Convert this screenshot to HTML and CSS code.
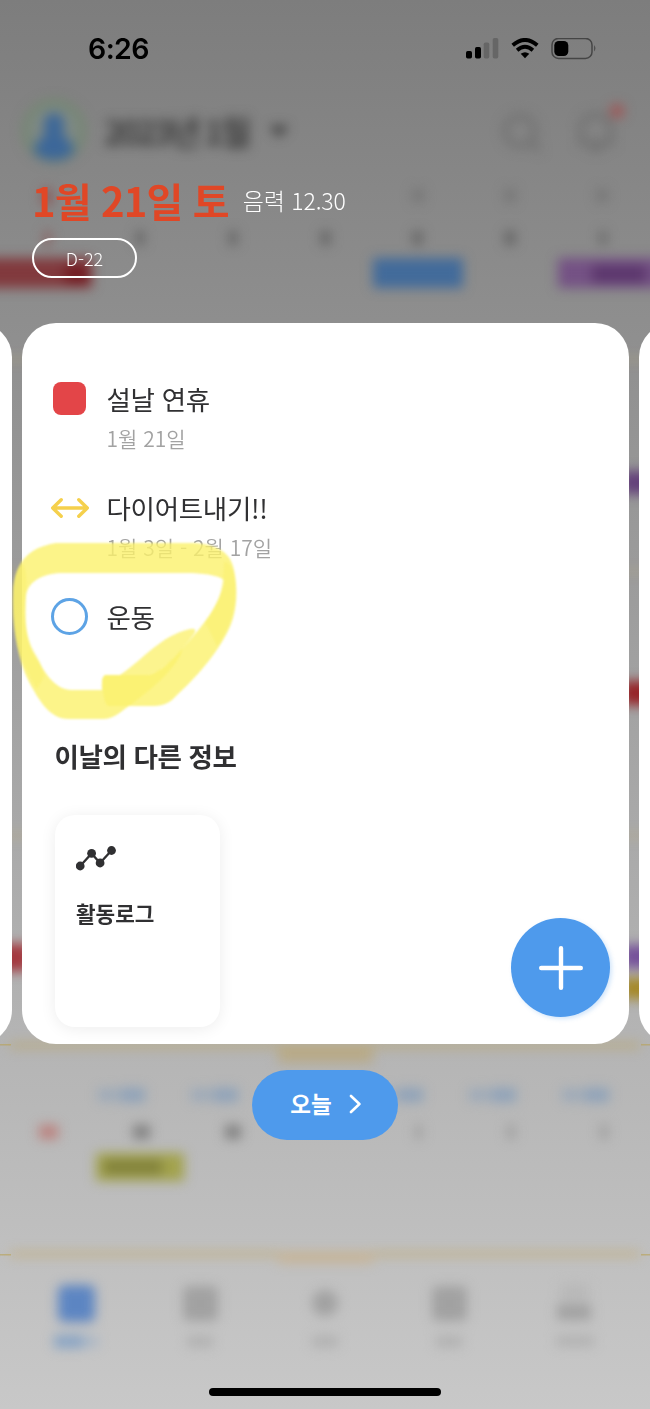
FILE: index.html
```html
<!DOCTYPE html>
<html lang="ko">
<head>
<meta charset="utf-8">
<title>1월 21일</title>
<link rel="stylesheet" href="styles.css">
</head>
<body>
<div class="screen">
  <svg class="backdrop" viewBox="0 0 650 1409" aria-hidden="true">
    <defs>
      <filter id="soft" x="-60" y="-60" width="770" height="1530" filterUnits="userSpaceOnUse" color-interpolation-filters="sRGB"><feGaussianBlur stdDeviation="6"/></filter>
    </defs>
    <g filter="url(#soft)">
      <circle cx="54" cy="131" r="29" fill="#7f8983" stroke="#6f866c" stroke-width="5"/>
      <path d="M34 152c0-10 8-14 12-18-5-12 0-21 8-21s13 9 8 21c4 4 12 8 12 18-9 11-31 11-40 0z" fill="#3c6799"/>
      <text class="backdrop-month" x="104" y="145" textLength="147">2023년 1월</text>
      <path d="M269 126h20l-10 11z" fill="#3a3a3a"/>
      <g fill="none" stroke="#6f6f6f" stroke-width="5">
        <circle cx="520" cy="131" r="15"/><path d="M531 142l9 9"/>
        <path d="M581 143v-12q0-16 15-16t15 16v12zM590 149h12"/>
      </g>
      <circle cx="617" cy="111" r="7" fill="#a05454"/>
      <g fill="#747474">
        <rect x="413" y="189" width="10" height="13"/><rect x="505" y="189" width="10" height="13"/><rect x="597" y="189" width="10" height="13"/>
      </g>
      <rect x="42" y="189" width="10" height="16" fill="#8b5555"/>
      <g fill="#626262">
        <rect x="136" y="231" width="8" height="14"/><rect x="229" y="231" width="8" height="14"/><rect x="321" y="231" width="9" height="14"/><rect x="413" y="231" width="9" height="14"/><rect x="505" y="231" width="10" height="14"/><rect x="600" y="231" width="6" height="14"/>
      </g>
      <rect x="44" y="231" width="7" height="15" fill="#8a6060"/>
      <rect x="-20" y="258" width="112" height="30" fill="#81393d"/><rect x="65" y="264" width="24" height="20" fill="#731d23"/>
      <rect x="373" y="258" width="90" height="30" fill="#426b9a"/>
      <rect x="558" y="258" width="122" height="30" fill="#745184"/><rect x="592" y="265" width="54" height="18" fill="#5c376d"/>
      <rect x="622" y="471" width="40" height="23" fill="#63407a"/>
      <rect x="622" y="681" width="40" height="24" fill="#962327"/>
      <rect x="622" y="945" width="40" height="23" fill="#75509a"/>
      <rect x="622" y="978" width="40" height="21" fill="#a58826"/>
      <rect x="-20" y="944" width="50" height="27" fill="#a3383f"/>
      <g fill="#b9a878">
        <rect x="-20" y="358" width="690" height="3" opacity=".6"/><rect x="-20" y="570" width="690" height="3" opacity=".6"/><rect x="-20" y="834" width="690" height="3" opacity=".8"/>
        <rect x="10" y="1043" width="630" height="5"/><rect x="278" y="1046" width="95" height="17" fill="#b8aa88"/>
        <rect x="10" y="1252" width="630" height="4" fill="#c2ab75"/><rect x="278" y="1253" width="95" height="10" fill="#c7b497"/>
      </g>
      <g fill="#8ea2b9">
        <rect x="98" y="1089" width="18" height="12" opacity=".7"/><rect x="119" y="1088" width="26" height="14"/>
        <rect x="191" y="1089" width="18" height="12" opacity=".7"/><rect x="212" y="1088" width="26" height="14"/>
        <rect x="376" y="1089" width="18" height="12" opacity=".7"/><rect x="397" y="1088" width="26" height="14"/>
        <rect x="469" y="1089" width="18" height="12" opacity=".7"/><rect x="490" y="1088" width="26" height="14"/>
        <rect x="562" y="1089" width="18" height="12" opacity=".7"/><rect x="583" y="1088" width="26" height="14"/>
      </g>
      <rect x="39" y="1125" width="19" height="14" fill="#bb817d"/>
      <g fill="#808080"><rect x="133" y="1125" width="17" height="14"/><rect x="225" y="1125" width="16" height="14"/></g>
      <g fill="#9e9e9e"><rect x="415" y="1125" width="7" height="14"/><rect x="507" y="1125" width="8" height="14"/><rect x="600" y="1125" width="8" height="14"/></g>
      <rect x="96" y="1153" width="88" height="28" fill="#a2a24c"/><rect x="104" y="1160" width="58" height="14" fill="#80803a"/>
      <rect x="58" y="1285" width="37" height="37" rx="6" fill="#5c85c2"/>
      <rect x="54" y="1335" width="29" height="13" fill="#87a3c4"/><rect x="83" y="1336" width="15" height="11" fill="#a9b6c6"/>
      <g fill="#a1a1a1">
        <rect x="183" y="1286" width="35" height="35" rx="5"/><circle cx="325" cy="1303" r="13"/>
        <rect x="432" y="1286" width="35" height="35" rx="5"/><rect x="557" y="1304" width="34" height="16"/>
      </g>
      <rect x="560" y="1284" width="29" height="16" fill="#b8b8b8"/>
      <g fill="#b0b0b0"><rect x="187" y="1336" width="26" height="11"/><rect x="312" y="1336" width="26" height="11"/><rect x="436" y="1336" width="26" height="11"/><rect x="556" y="1336" width="38" height="10"/></g>
    </g>
    <g fill="#baa254" opacity=".6"><rect y="1044" width="11" height="1.5"/><rect x="641" y="1044" width="9" height="1.5"/><rect y="1254" width="11" height="1.5"/><rect x="641" y="1254" width="9" height="1.5"/></g>
  </svg>

  <header class="status">
    <span class="clock">6:26</span>
    <span class="indicators">
      <svg width="33" height="22" viewBox="0 0 33 22"><rect y="13" width="6" height="7.5" rx="1.7"/><rect x="9" y="9" width="6" height="11.5" rx="1.7"/><g fill="#666"><rect x="17.7" y="4.5" width="5.6" height="16" rx="1.7"/><rect x="26.7" width="5.6" height="20.5" rx="1.7"/></g></svg>
      <svg width="28" height="22" viewBox="0 0 28 22"><g fill="none" stroke="#000" stroke-width="3.8"><path d="M1.7 7.3Q14-3.5 26.3 7.3"/><path d="M6.1 12.3q7.9-6.9 15.8 0"/></g><path d="M9.7 15.8q4.3-3.2 8.6 0L14 20.3z"/></svg>
      <svg width="46" height="22" viewBox="0 0 46 22"><rect x="1" y=".4" width="40" height="20" rx="6.5" fill="none" stroke="#454545" stroke-width="1.5"/><rect x="3.3" y="3" width="14" height="15" rx="4.5"/><path d="M43.2 7q2.4 3.3 0 6.6z" fill="#454545"/></svg>
    </span>
  </header>

  <section class="day">
    <div class="day-row"><h1 class="day-title">1월 21일 토</h1><span class="lunar">음력 12.30</span></div>
    <span class="dday">D-22</span>
  </section>

  <main class="carousel">
    <div class="card"></div>
    <article class="card card-main">
      <ul class="events">
        <li class="event"><span class="mark"><i class="square"></i></span><div><p class="name">설날 연휴</p><p class="when">1월 21일</p></div></li>
        <li class="event"><span class="mark"><svg width="40" height="24" viewBox="0 0 40 24"><path d="M2.7 12h34.6M11.2 3.7L2.7 12l8.5 8.3M28.8 3.7l8.5 8.3-8.5 8.3" fill="none" stroke="#f5d04c" stroke-width="3.4" stroke-linecap="round" stroke-linejoin="round"/></svg></span><div><p class="name">다이어트내기!!</p><p class="when">1월 3일 - 2월 17일</p></div></li>
        <li class="event"><span class="mark"><i class="ring"></i></span><div><p class="name">운동</p></div></li>
      </ul>
      <h2 class="section-title">이날의 다른 정보</h2>
      <div class="tile">
        <svg width="42" height="28" viewBox="0 0 42 28" fill="#303032"><path d="M4.2 21L15.6 8.5l8.4 9.5L35.5 5.5" fill="none" stroke="#303032" stroke-width="2.3"/><circle cx="4.2" cy="21" r="4.4"/><circle cx="15.6" cy="8.3" r="4.4"/><circle cx="24.1" cy="18" r="4.4"/><circle cx="35.5" cy="5.5" r="4.4"/></svg>
        <p class="tile-name">활동로그</p>
      </div>
      <button class="add" aria-label="추가"><svg width="46" height="46" viewBox="0 0 46 46"><path d="M23 3.2v39.6M3.2 23h39.6" stroke="#fff" stroke-width="4.4" stroke-linecap="round"/></svg></button>
    </article>
    <div class="card"></div>
  </main>

  <button class="today"><span>오늘</span><svg width="12" height="20" viewBox="0 0 12 20"><path d="M2 2l8.4 8L2 18" fill="none" stroke="#fff" stroke-width="2.6" stroke-linecap="round" stroke-linejoin="round"/></svg></button>
  <div class="home-bar"></div>

  <svg class="highlighter" viewBox="0 0 240 190" aria-hidden="true">
    <g fill="#fbf16b">
      <path fill-rule="evenodd" opacity=".8" d="M13 54C14 24 26 8 56 3H195C220 5 231 14 234 30C239 53 236 77 227 93C213 120 190 143 175 157C168 165 160 166 151 166H129C119 173 113 179 103 179H69C49 179 39 160 29 142C17 118 12 88 13 54ZM26 57C27 42 42 34 60 33H192C210 34 218 36 224 40C223 53 214 71 200 88C180 112 165 130 148 135H105Q101 137 102 150H72C53 150 43 129 33 112C25 97 25 76 26 57Z"/>
      <path opacity=".76" d="M120 135C145 118 160 96 190 89Q198 88 194 94C180 113 165 130 148 135Z"/>
      <path opacity=".7" d="M105 135H148C160 133 170 123 183 108Q178 130 129 166H108Q103 163 102 139Z"/>
      <path opacity=".5" d="M13 54C13 37 18 26 23 24Q29 36 25 58C23 85 29 104 36 115Q43 126 44 137L37 149C18 119 12 88 13 54ZM224 22Q232 22 235 38C238 65 230 88 217 106L205 82C219 62 223 52 224 22Z"/>
    </g>
  </svg>
</div>
</body>
</html>
```
FILE: styles.css
```css
* { box-sizing: border-box; margin: 0; padding: 0; }

body {
  font-family: "Noto Sans CJK KR", "Noto Sans", sans-serif;
  color: #303032;
}

button { border: 0; font: inherit; }
svg { display: block; }

.screen {
  position: relative;
  display: flex;
  flex-direction: column;
  width: 650px;
  height: 1409px;
  overflow: hidden;
  background: linear-gradient(#7d7d7d, #c8c8c8);
}

.backdrop { position: absolute; inset: 0; width: 650px; height: 1409px; }
.backdrop-month { font-size: 33px; font-weight: 700; fill: #3c3c3c; }

.status, .day, .carousel, .today, .home-bar { position: relative; flex: none; }

.status {
  display: flex;
  justify-content: space-between;
  align-items: center;
  height: 97px;
  padding: 0 53px 0 88px;
  color: #000;
}
.clock { font: 600 28.5px/40px Inter, sans-serif; letter-spacing: -.6px; }
.indicators { display: flex; gap: 12px; }

.day { height: 225.5px; padding: 73px 32px 0; }
.day-row { display: flex; gap: 14px; align-items: center; height: 60px; white-space: nowrap; }
.day-title { font-size: 40px; line-height: 60px; font-weight: 700; letter-spacing: -.85px; color: #e04726; }
.lunar { font-size: 23px; line-height: 60px; font-weight: 300; letter-spacing: -.1px; color: #fff; }
.dday {
  display: flex;
  align-items: center;
  justify-content: center;
  width: 105px;
  height: 40px;
  margin-top: 8px;
  border: 2px solid #fff;
  border-radius: 20px;
  font-size: 18px;
  line-height: 36px;
  font-weight: 300;
  color: #fff;
}

.carousel { display: flex; justify-content: center; gap: 10px; height: 721px; }
.card { flex: none; width: 607px; border-radius: 34px; background: #fff; }
.card-main { position: relative; padding: 56px 0 0 28px; }

.events { list-style: none; height: 354px; }
.event { display: flex; gap: 17px; height: 109px; }
.mark { display: flex; align-items: center; justify-content: center; width: 40px; height: 40px; }
.square { width: 33px; height: 33px; border-radius: 8px; background: #e34548; }
.ring { width: 37px; height: 37px; border: 3.5px solid #5da3e5; border-radius: 50%; }
.name { font-size: 26.5px; line-height: 40px; letter-spacing: -.3px; }
.when { font-size: 21px; line-height: 38px; font-weight: 350; color: #a2a2a2; }

.section-title { margin: 1px 0 0 5px; font-size: 26.5px; line-height: 44px; font-weight: 700; letter-spacing: -.4px; }
.tile {
  width: 165.5px;
  height: 212px;
  margin: 37px 0 0 5px;
  padding: 30px 21.5px;
  border-radius: 20px;
  box-shadow: 0 2px 16px rgba(0, 0, 0, .075);
}
.tile-name { margin-top: 25px; font-size: 21.3px; line-height: 30px; font-weight: 700; }

.add {
  position: absolute;
  right: 18.5px;
  bottom: 26.5px;
  display: grid;
  place-items: center;
  width: 99px;
  height: 99px;
  border-radius: 50%;
  background: #4e9aec;
  box-shadow: 2px 2px 4px rgba(78, 154, 236, .25);
}

.today {
  display: flex;
  align-items: center;
  justify-content: center;
  gap: 17px;
  width: 146px;
  height: 69.5px;
  margin: 26.5px 0 0 252px;
  padding: 0 0 1px 1px;
  border-radius: 35px;
  background: #4e9aec;
  color: #fff;
  font-size: 22.5px;
  line-height: 32px;
  font-weight: 700;
}
.today span { margin-top: -2px; }

.home-bar { width: 232px; height: 8px; margin: 248px 0 0 209px; border-radius: 5px; background: #000; }

.highlighter { position: absolute; left: 0; top: 540px; width: 240px; height: 190px; filter: blur(.8px); }
```
